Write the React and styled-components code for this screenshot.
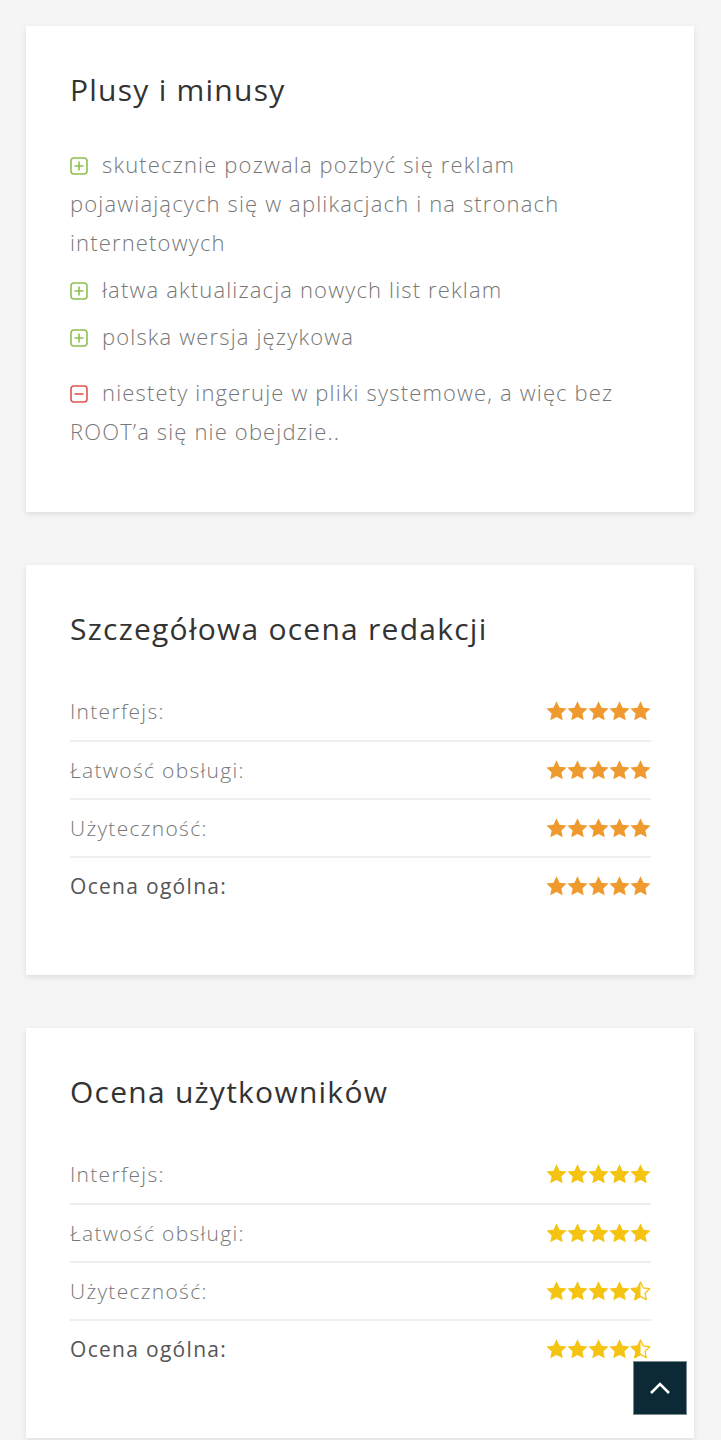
import React from 'react';
import styled, { createGlobalStyle } from 'styled-components';

const GlobalStyle = createGlobalStyle`
  html, body {
    margin: 0;
    padding: 0;
    background: #f5f5f5;
  }
  body {
    font-family: 'Open Sans', 'Lato', sans-serif;
    color: #777;
  }
`;

const Page = styled.div`
  display: flex;
  flex-direction: column;
  gap: 53px;
  padding: 26px 27px 20px 26px;
`;

const Card = styled.section`
  background: #fff;
  box-shadow: 0 2px 6px rgba(0, 0, 0, 0.1);
  padding: 46px 43px 61px 44px;
`;

const Title = styled.h2`
  margin: 0 0 ${(p) => p.$gap || 35}px;
  font-size: 30px;
  line-height: 36px;
  font-weight: 400;
  color: #333;
  letter-spacing: 1.25px;
`;

const ProsList = styled.ul`
  list-style: none;
  margin: 0;
  padding: 0;
  display: flex;
  flex-direction: column;
  gap: 8px;
`;

const ProsItem = styled.li`
  font-size: 22px;
  line-height: 39px;
  font-weight: 300;
  letter-spacing: 1.15px;
  color: #777;
  margin-top: ${(p) => (p.$minus ? '9px' : '0')};
`;

const IconBox = styled.span`
  display: inline-block;
  width: 18px;
  height: 18px;
  margin-right: 14px;
  vertical-align: -2px;
`;

const Rows = styled.div`
  display: flex;
  flex-direction: column;
`;

const Row = styled.div`
  display: flex;
  align-items: center;
  justify-content: space-between;
  height: 58px;
  border-top: ${(p) => (p.$first ? 'none' : '2px solid #eee')};
  box-sizing: border-box;
`;

const Label = styled.span`
  font-size: 21px;
  letter-spacing: 1.3px;
  font-weight: ${(p) => (p.$strong ? 500 : 300)};
  color: ${(p) => (p.$strong ? '#555' : '#777')};
`;

const Stars = styled.span`
  display: flex;
`;

const TopButton = styled.button`
  position: fixed;
  left: 633px;
  top: 1361px;
  width: 54px;
  height: 54px;
  background: #0b2a36;
  border: 1px solid #7a8a90;
  display: flex;
  align-items: center;
  justify-content: center;
  padding: 0;
  cursor: pointer;
`;

const PlusIcon = ({ color }) => (
  <IconBox>
    <svg width="18" height="18" viewBox="0 0 18 18">
      <rect x="1" y="1" width="16" height="16" rx="3" fill="none" stroke={color} strokeWidth="1.6" />
      <path d="M9 4.5v9M4.5 9h9" stroke={color} strokeWidth="1.6" />
    </svg>
  </IconBox>
);

const MinusIcon = ({ color }) => (
  <IconBox>
    <svg width="18" height="18" viewBox="0 0 18 18">
      <rect x="1" y="1" width="16" height="16" rx="3" fill="none" stroke={color} strokeWidth="1.6" />
      <path d="M4.5 9h9" stroke={color} strokeWidth="1.6" />
    </svg>
  </IconBox>
);

const STAR =
  'M10.5 0.3l3.05 6.35 7.05.9-5.2 4.85 1.35 6.95-6.25-3.45-6.25 3.45 1.35-6.95-5.2-4.85 7.05-.9z';

const Star = ({ color, kind, id }) => (
  <svg width="21" height="20" viewBox="0 0 21 20">
    {kind === 'half' && (
      <defs>
        <clipPath id={id}>
          <rect x="0" y="0" width="10.5" height="20" />
        </clipPath>
      </defs>
    )}
    {kind === 'full' && <path d={STAR} fill={color} />}
    {kind === 'half' && (
      <>
        <path
          d={STAR}
          fill="none"
          stroke={color}
          strokeWidth="1.4"
          strokeLinejoin="round"
          transform="translate(10.5 10) scale(0.92) translate(-10.5 -10)"
        />
        <path d={STAR} fill={color} clipPath={`url(#${id})`} />
      </>
    )}
  </svg>
);

const StarRating = ({ value, color, id }) => (
  <Stars>
    {[0, 1, 2, 3, 4].map((i) => {
      const kind = value >= i + 1 ? 'full' : value >= i + 0.5 ? 'half' : 'empty';
      return <Star key={i} color={color} kind={kind} id={`${id}-${i}`} />;
    })}
  </Stars>
);

const pros = [
  { minus: false, text: 'skutecznie pozwala pozbyć się reklam pojawiających się w aplikacjach i na stronach internetowych' },
  { minus: false, text: 'łatwa aktualizacja nowych list reklam' },
  { minus: false, text: 'polska wersja językowa' },
  { minus: true, text: 'niestety ingeruje w pliki systemowe, a więc bez ROOT’a się nie obejdzie..' },
];

const editorRatings = [
  { label: 'Interfejs:', value: 5 },
  { label: 'Łatwość obsługi:', value: 5 },
  { label: 'Użyteczność:', value: 5 },
  { label: 'Ocena ogólna:', value: 5, strong: true },
];

const userRatings = [
  { label: 'Interfejs:', value: 5 },
  { label: 'Łatwość obsługi:', value: 5 },
  { label: 'Użyteczność:', value: 4.5 },
  { label: 'Ocena ogólna:', value: 4.5, strong: true },
];

const RatingCard = ({ title, ratings, color, id }) => (
  <Card>
    <Title>{title}</Title>
    <Rows>
      {ratings.map((r, i) => (
        <Row key={r.label} $first={i === 0}>
          <Label $strong={r.strong}>{r.label}</Label>
          <StarRating value={r.value} color={color} id={`${id}-${i}`} />
        </Row>
      ))}
    </Rows>
  </Card>
);

export default function App() {
  return (
    <>
      <GlobalStyle />
      <Page>
        <Card>
          <Title $gap={37}>Plusy i minusy</Title>
          <ProsList>
            {pros.map((p) => (
              <ProsItem key={p.text} $minus={p.minus}>
                {p.minus ? <MinusIcon color="#e0544c" /> : <PlusIcon color="#8cc152" />}
                {p.text}
              </ProsItem>
            ))}
          </ProsList>
        </Card>
        <RatingCard title="Szczegółowa ocena redakcji" ratings={editorRatings} color="#ef9a2e" id="ed" />
        <RatingCard title="Ocena użytkowników" ratings={userRatings} color="#f5c412" id="us" />
      </Page>
      <TopButton aria-label="Do góry">
        <svg width="22" height="14" viewBox="0 0 22 14">
          <path d="M2 12L11 3l9 9" fill="none" stroke="#fff" strokeWidth="2.6" />
        </svg>
      </TopButton>
    </>
  );
}
